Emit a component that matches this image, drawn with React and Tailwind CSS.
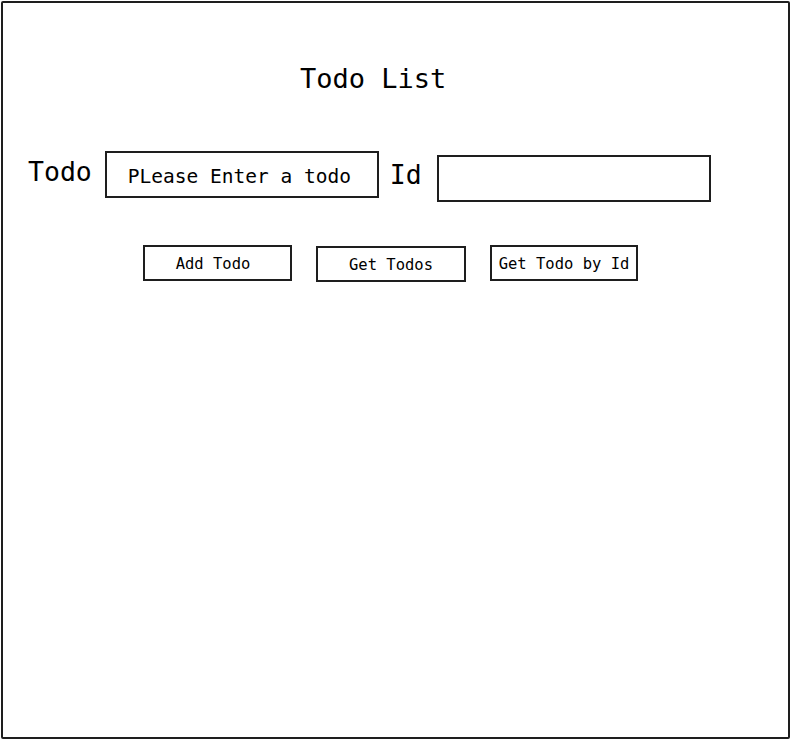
import { useState } from "react";

const mono = "font-['DejaVu_Sans_Mono','Liberation_Mono',monospace]";

export default function App() {
  const [todo, setTodo] = useState("PLease Enter a todo");
  const [id, setId] = useState("");

  return (
    <div className={`w-[795px] h-[741px] bg-white ${mono} text-black`}>
      <div className="ml-px mt-px w-[789px] h-[738px] border-2 border-[#1e1e1e] rounded-[2px]">
        <h1 className="pt-[62px] pl-[297px] text-[27px] leading-[28px] font-normal">
          Todo List
        </h1>

        {/* inputs */}
        <div className="flex items-start mt-[58px] pl-[25px]">
          <label className="mt-[4px] text-[26.5px] leading-[34px]">Todo</label>
          <input
            className="ml-[13px] w-[274px] h-[47px] border-2 border-[#1e1e1e] pl-[21px] pt-[3px] text-[19.5px] text-black outline-none"
            value={todo}
            onChange={(e) => setTodo(e.target.value)}
          />
          <label className="ml-[11px] mt-[7px] text-[26.5px] leading-[34px]">Id</label>
          <input
            className="ml-[15px] mt-[4px] w-[274px] h-[47px] border-2 border-[#1e1e1e] px-3 text-[19.5px] outline-none"
            value={id}
            onChange={(e) => setId(e.target.value)}
          />
        </div>

        {/* buttons */}
        <div className="flex items-start mt-[43px] pl-[140px]">
          <button className="w-[149px] h-[36px] border-2 border-[#1e1e1e] pt-[4px] pr-[9px] text-[15.5px]">
            Add Todo
          </button>
          <button className="ml-[24px] mt-px w-[150px] h-[36px] border-2 border-[#1e1e1e] pt-[4px] text-[15.5px]">
            Get Todos
          </button>
          <button className="ml-[24px] w-[148px] h-[36px] border-2 border-[#1e1e1e] pt-[4px] text-[15.5px]">
            Get Todo by Id
          </button>
        </div>
      </div>
    </div>
  );
}
